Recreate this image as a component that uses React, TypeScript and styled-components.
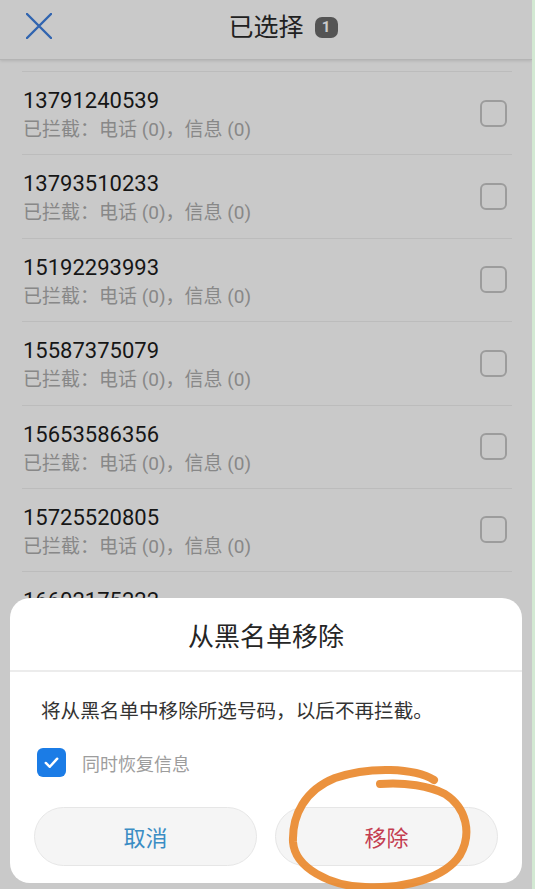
import React from 'react';
import styled, { createGlobalStyle } from 'styled-components';

const GlobalStyle = createGlobalStyle`
    html, body {
        margin: 0;
        padding: 0;
        background: #cacaca;
    }
    * {
        box-sizing: border-box;
    }
`;

const FONT = `Roboto, "Noto Sans CJK SC", "Noto Sans", sans-serif`;

const Frame = styled.div`
    width: 535px;
    height: 889px;
    display: flex;
    overflow: hidden;
    border-right: 3px solid #d3e9d3;
    font-family: ${FONT};
`;

const Screen = styled.div`
    position: relative;
    flex: 1;
    background: #fcfcfc;
    overflow: hidden;
`;

const Header = styled.header`
    height: 60px;
    display: grid;
    grid-template-columns: 80px 1fr 80px;
    align-items: center;
    border-bottom: 1px solid #e2e2e2;
    box-shadow: 0 1px 3px rgba(0, 0, 0, 0.12);
`;

const CloseButton = styled.button`
    border: none;
    background: none;
    padding: 0 0 0 26px;
    margin-top: -8px;
    display: flex;
    align-items: center;
`;

const TitleWrap = styled.div`
    display: flex;
    justify-content: center;
    margin-top: -3px;
`;

const Title = styled.h1`
    position: relative;
    margin: 0;
    font-size: 25px;
    font-weight: 400;
    color: #2a2a2a;
    line-height: 32px;
`;

const Badge = styled.span`
    position: absolute;
    left: calc(100% + 11px);
    top: 5px;
    width: 23px;
    height: 21px;
    border-radius: 7px;
    background: #6a6a6a;
    color: #fff;
    font-size: 15px;
    font-weight: 700;
    line-height: 21px;
    text-align: center;
`;

const List = styled.ul`
    list-style: none;
    margin: 0 20px 0 22px;
    padding: 11px 0 0;
`;

const Row = styled.li`
    display: flex;
    align-items: center;
    border-top: 1px solid #ececec;
    padding: 15px 5px 11.4px 1px;
`;

const RowText = styled.div`
    flex: 1;
    display: flex;
    flex-direction: column;
    gap: 2px;
`;

const Number = styled.span`
    font-size: 22px;
    line-height: 28px;
    color: #1c1c1c;
`;

const Blocked = styled.span`
    font-size: 19px;
    line-height: 26px;
    color: #aaaaaa;
`;

const Box = styled.span<{ $checked?: boolean; $size: number }>`
    width: ${({ $size }) => $size}px;
    height: ${({ $size }) => $size}px;
    flex: none;
    border-radius: 6px;
    border: ${({ $checked }) => ($checked ? 'none' : '2px solid #c4c4c4')};
    background: ${({ $checked }) => ($checked ? '#1b7ce6' : 'transparent')};
    display: flex;
    align-items: center;
    justify-content: center;
`;

const RowBox = styled(Box)`
    margin-bottom: 4px;
`;

const Scrim = styled.div`
    position: absolute;
    inset: 0;
    background: rgba(0, 0, 0, 0.2);
`;

const Dialog = styled.div`
    position: absolute;
    left: 10px;
    right: 10px;
    bottom: 6px;
    background: #fff;
    border-radius: 20px;
    overflow: hidden;
`;

const DialogTitle = styled.h2`
    margin: 0;
    height: 74px;
    display: flex;
    align-items: center;
    justify-content: center;
    font-size: 26px;
    font-weight: 400;
    color: #252525;
    border-bottom: 2px solid #ececec;
`;

const DialogBody = styled.div`
    padding: 26px 24px 17px;
    display: flex;
    flex-direction: column;
`;

const Message = styled.p`
    margin: 0 0 0 7px;
    font-size: 19.6px;
    line-height: 28px;
    color: #333;
`;

const OptionRow = styled.label`
    display: flex;
    align-items: center;
    gap: 16px;
    margin: 22px 0 0 3px;
    font-size: 18px;
    color: #9d9d9d;
`;

const Buttons = styled.div`
    display: grid;
    grid-template-columns: 1fr 1fr;
    gap: 18px;
    margin-top: 30px;
`;

const PillButton = styled.button<{ $tone: 'blue' | 'red' }>`
    height: 59px;
    border-radius: 30px;
    border: 1px solid #e6e6e6;
    background: #f5f5f5;
    font-family: ${FONT};
    font-size: 22px;
    padding-bottom: 3px;
    color: ${({ $tone }) => ($tone === 'blue' ? '#3a8dc4' : '#c43d50')};
`;

const Annotation = styled.svg`
    position: absolute;
    inset: 0;
    pointer-events: none;
`;

const numbers = [
    '13791240539',
    '13793510233',
    '15192293993',
    '15587375079',
    '15653586356',
    '15725520805',
    '16602175222',
];

const App = () => {
    return (
        <Frame>
            <GlobalStyle />
            <Screen>
                <Header>
                    <CloseButton aria-label="close">
                        <svg width="26" height="26" viewBox="0 0 26 26">
                            <path d="M1 1 L25 25 M25 1 L1 25" stroke="#3d7ddc" strokeWidth="2.4" strokeLinecap="round" />
                        </svg>
                    </CloseButton>
                    <TitleWrap>
                        <Title>
                            已选择
                            <Badge>1</Badge>
                        </Title>
                    </TitleWrap>
                </Header>
                <List>
                    {numbers.map((n) => (
                        <Row key={n}>
                            <RowText>
                                <Number>{n}</Number>
                                <Blocked>已拦截：电话 (0)，信息 (0)</Blocked>
                            </RowText>
                            <RowBox $size={27} />
                        </Row>
                    ))}
                </List>
                <Scrim />
                <Dialog>
                    <DialogTitle>从黑名单移除</DialogTitle>
                    <DialogBody>
                        <Message>将从黑名单中移除所选号码，以后不再拦截。</Message>
                        <OptionRow>
                            <Box $checked $size={29}>
                                <svg width="19" height="19" viewBox="0 0 20 20">
                                    <path d="M4 10.5 L8.2 14.5 L16 6" fill="none" stroke="#fff" strokeWidth="2.6" strokeLinecap="round" strokeLinejoin="round" />
                                </svg>
                            </Box>
                            同时恢复信息
                        </OptionRow>
                        <Buttons>
                            <PillButton $tone="blue">取消</PillButton>
                            <PillButton $tone="red">移除</PillButton>
                        </Buttons>
                    </DialogBody>
                </Dialog>
                <Annotation viewBox="0 0 532 889" width="532" height="889">
                    <path
                        d="M434 780 C415 768, 370 766, 335 778 C305 790, 292 815, 293 842 C295 868, 330 886, 365 887 C405 889, 445 878, 460 855 C472 834, 467 808, 445 794 C430 786, 405 782, 380 784"
                        fill="none"
                        stroke="#ea8c34"
                        strokeWidth="8"
                        strokeLinecap="round"
                        strokeLinejoin="round"
                        opacity="0.95"
                    />
                </Annotation>
            </Screen>
        </Frame>
    );
};

export default App;
